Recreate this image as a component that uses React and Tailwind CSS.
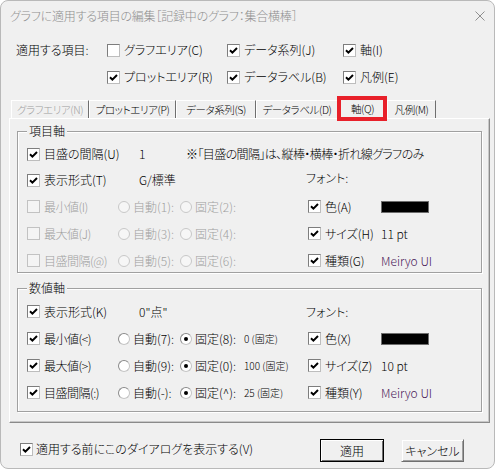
import React from 'react';
import clsx from 'clsx';

function Check({ on, disabled }) {
  return (
    <span
      className={clsx(
        'flex h-[13px] w-[13px] shrink-0 items-center justify-center border',
        disabled
          ? 'border-[#c2c2c2] bg-[#f4f4f4]'
          : 'border-[#7d7d7d] border-r-[#bdbdbd] border-b-[#bdbdbd] bg-white'
      )}
    >
      {on && (
        <svg viewBox="0 0 11 11" className="h-[11px] w-[11px]">
          <path d="M2 5.2 L4.4 7.6 L9 3" stroke="#000" strokeWidth="2" fill="none" />
        </svg>
      )}
    </span>
  );
}

function Radio({ on, disabled }) {
  return (
    <span
      className={clsx(
        'flex h-[12px] w-[12px] shrink-0 items-center justify-center rounded-full border',
        disabled
          ? 'border-[#c8c8c8] bg-[#f6f6f6]'
          : 'border-[#8a8a8a] border-r-[#c4c4c4] border-b-[#c4c4c4] bg-white'
      )}
    >
      {on && <span className="h-[4px] w-[4px] rounded-full bg-black" />}
    </span>
  );
}

function CheckLabel({ on, disabled, label, className, tight }) {
  return (
    <div className={clsx('flex items-center', className)}>
      <Check on={on} disabled={disabled} />
      <span
        className={clsx(
          'ml-[4px] whitespace-nowrap',
          tight && 'tracking-[-0.5px]',
          disabled && 'text-[#a0a0a0]'
        )}
      >
        {label}
      </span>
    </div>
  );
}

function RadioLabel({ on, disabled, label, className }) {
  return (
    <div className={clsx('flex items-center', className)}>
      <Radio on={on} disabled={disabled} />
      <span className={clsx('ml-[3px] whitespace-nowrap', disabled && 'text-[#a0a0a0]')}>{label}</span>
    </div>
  );
}

function FontCell({ label, children }) {
  return (
    <div className="flex items-center pl-[2px]">
      <CheckLabel on label={label} className="w-[73px]" />
      {children}
    </div>
  );
}

function Group({ title, className, children }) {
  return (
    <div
      className={clsx(
        'relative mx-[7px] border border-[#a0a0a0] pl-[9px] shadow-[inset_1px_1px_0_#fff,1px_1px_0_#fff]',
        className
      )}
    >
      <span className="absolute -top-[8px] left-[9px] bg-[#f0f0f0] px-[2px] leading-[14px]">{title}</span>
      {children}
    </div>
  );
}

function RangeRow({ h, label, disabled, auto, fixed, fixedOn, value, right }) {
  return (
    <div className={clsx('flex items-center', h)}>
      <div className="flex w-[279px] items-center">
        <CheckLabel on={!disabled} disabled={disabled} label={label} tight className="w-[91px]" />
        <RadioLabel disabled={disabled} label={auto} className="w-[62px]" />
        <RadioLabel on={fixedOn} disabled={disabled} label={fixed} className="w-[64px]" />
        {value && <span className="whitespace-nowrap text-[10px]">{value}</span>}
      </div>
      {right}
    </div>
  );
}

const tabs = [
  { label: 'グラフエリア(N)', w: 'w-[78px]', disabled: true },
  { label: 'プロットエリア(P)', w: 'w-[87px]' },
  { label: 'データ系列(S)', w: 'w-[80px]' },
  { label: 'データラベル(D)', w: 'w-[82px]' },
  { label: '軸(Q)', w: 'w-[49px]', active: true },
  { label: '凡例(M)', w: 'w-[49px]' },
];

export default function App() {
  return (
    <div className="h-[470px] w-[496px] bg-white font-['Noto_Sans_CJK_JP',sans-serif] text-[12px] leading-[14px] font-light text-black [font-feature-settings:'palt']">
      <div className="flex h-[469px] w-[495px] flex-col overflow-hidden rounded-[8px] border border-[#b9b9b9] bg-[#f0f0f0]">
        {/* title bar */}
        <div className="flex h-[29px] shrink-0 items-center justify-between pl-[9px] pr-[9px] text-[#8f8f8f]">
          <span className="whitespace-nowrap tracking-[-0.2px]">グラフに適用する項目の編集［記録中のグラフ：集合横棒］</span>
          <svg viewBox="0 0 10 10" className="h-[10px] w-[10px]">
            <path d="M0.5 0.5 L9.5 9.5 M9.5 0.5 L0.5 9.5" stroke="#8f8f8f" strokeWidth="1" />
          </svg>
        </div>

        {/* apply items */}
        <div className="mt-[10px] flex h-[20px] items-center pl-[15px]">
          <span className="w-[91px] whitespace-nowrap">適用する項目:</span>
          <CheckLabel label="グラフエリア(C)" className="w-[120px]" />
          <CheckLabel on label="データ系列(J)" className="w-[116px]" />
          <CheckLabel on label="軸(I)" />
        </div>
        <div className="mt-[7px] flex h-[20px] items-center pl-[106px]">
          <CheckLabel on label="プロットエリア(R)" className="w-[120px]" />
          <CheckLabel on label="データラベル(B)" className="w-[116px]" />
          <CheckLabel on label="凡例(E)" />
        </div>

        {/* tabs */}
        <div className="relative z-10 mt-[10px] ml-[10px] flex h-[21px] items-end text-[10.5px] tracking-[-0.4px]">
          {tabs.map((t) => (
            <div
              key={t.label}
              className={clsx(
                'relative flex shrink-0 items-center justify-center whitespace-nowrap border-l border-t border-white border-r-[#6f6f6f] border-r',
                t.w,
                t.active ? '-mb-px h-[22px] bg-[#f0f0f0]' : 'h-[18px]',
                t.disabled && 'text-[#a0a0a0]'
              )}
            >
              {t.label}
              {t.active && (
                <span className="absolute -left-[2px] -right-[1px] -top-[2px] h-[25px] border-[4px] border-[#e8202a]" />
              )}
            </div>
          ))}
        </div>

        {/* panel */}
        <div className="mx-[8px] w-[481px] border border-white border-r-[#8a8a8a] border-b-[#8a8a8a] pt-[12px] pb-[10px] shadow-[inset_-1px_-1px_0_#c8c8c8]">
          <Group title="項目軸" className="h-[142px] pt-[9px]">
            <div className="flex h-[26px] items-center">
              <CheckLabel on label="目盛の間隔(U)" className="w-[112px]" />
              <span className="w-[47px]">1</span>
              <span className="whitespace-nowrap tracking-[-0.6px]">※「目盛の間隔」は、縦棒・横棒・折れ線グラフのみ</span>
            </div>
            <div className="flex h-[26px] items-center">
              <div className="flex w-[279px] items-center">
                <CheckLabel on label="表示形式(T)" className="w-[112px]" />
                <span>G/標準</span>
              </div>
              <span className="-mt-[5px]">フォント:</span>
            </div>
            <RangeRow
              h="h-[27px]"
              disabled
              label="最小値(I)"
              auto="自動(1):"
              fixed="固定(2):"
              right={
                <FontCell label="色(A)">
                  <span className="h-[12px] w-[48px] border border-[#6d6d6d] bg-black" />
                </FontCell>
              }
            />
            <RangeRow
              h="h-[27px]"
              disabled
              label="最大値(J)"
              auto="自動(3):"
              fixed="固定(4):"
              right={
                <FontCell label="サイズ(H)">
                  <span>11 pt</span>
                </FontCell>
              }
            />
            <RangeRow
              h="h-[27px]"
              disabled
              label="目盛間隔(@)"
              auto="自動(5):"
              fixed="固定(6):"
              right={
                <FontCell label="種類(G)">
                  <span className="text-[#4a1a5a]">Meiryo UI</span>
                </FontCell>
              }
            />
          </Group>

          <Group title="数値軸" className="mt-[15px] h-[124px] pt-[9px]">
            <div className="flex h-[27px] items-center">
              <div className="flex w-[279px] items-center">
                <CheckLabel on label="表示形式(K)" className="w-[112px]" />
                <span>0"点"</span>
              </div>
              <span>フォント:</span>
            </div>
            <RangeRow
              h="h-[27px]"
              label="最小値(<)"
              auto="自動(7):"
              fixed="固定(8):"
              fixedOn
              value="0 (固定)"
              right={
                <FontCell label="色(X)">
                  <span className="h-[12px] w-[48px] border border-[#6d6d6d] bg-black" />
                </FontCell>
              }
            />
            <RangeRow
              h="h-[27px]"
              label="最大値(>)"
              auto="自動(9):"
              fixed="固定(0):"
              fixedOn
              value="100 (固定)"
              right={
                <FontCell label="サイズ(Z)">
                  <span>10 pt</span>
                </FontCell>
              }
            />
            <RangeRow
              h="h-[27px]"
              label="目盛間隔(:)"
              auto="自動(-):"
              fixed="固定(^):"
              fixedOn
              value="25 (固定)"
              right={
                <FontCell label="種類(Y)">
                  <span className="text-[#4a1a5a]">Meiryo UI</span>
                </FontCell>
              }
            />
          </Group>
        </div>

        {/* footer */}
        <div className="mt-[16px] flex items-start pl-[19px] pr-[30px]">
          <div className="mt-[3px] flex items-center">
            <Check on />
            <span className="ml-[3px] whitespace-nowrap">適用する前にこのダイアログを表示する(V)</span>
          </div>
          <div className="ml-auto flex">
            <button className="h-[23px] w-[64px] border border-black bg-[#f0f0f0] shadow-[inset_1px_1px_0_#fff,inset_-1px_-1px_0_#6f6f6f]">
              適用
            </button>
            <button className="ml-[17px] h-[23px] w-[63px] border border-[#f0f0f0] border-r-[#6f6f6f] border-b-[#6f6f6f] bg-[#f0f0f0] shadow-[inset_1px_1px_0_#fff,inset_-1px_-1px_0_#a0a0a0]">
              キャンセル
            </button>
          </div>
        </div>
      </div>
    </div>
  );
}
